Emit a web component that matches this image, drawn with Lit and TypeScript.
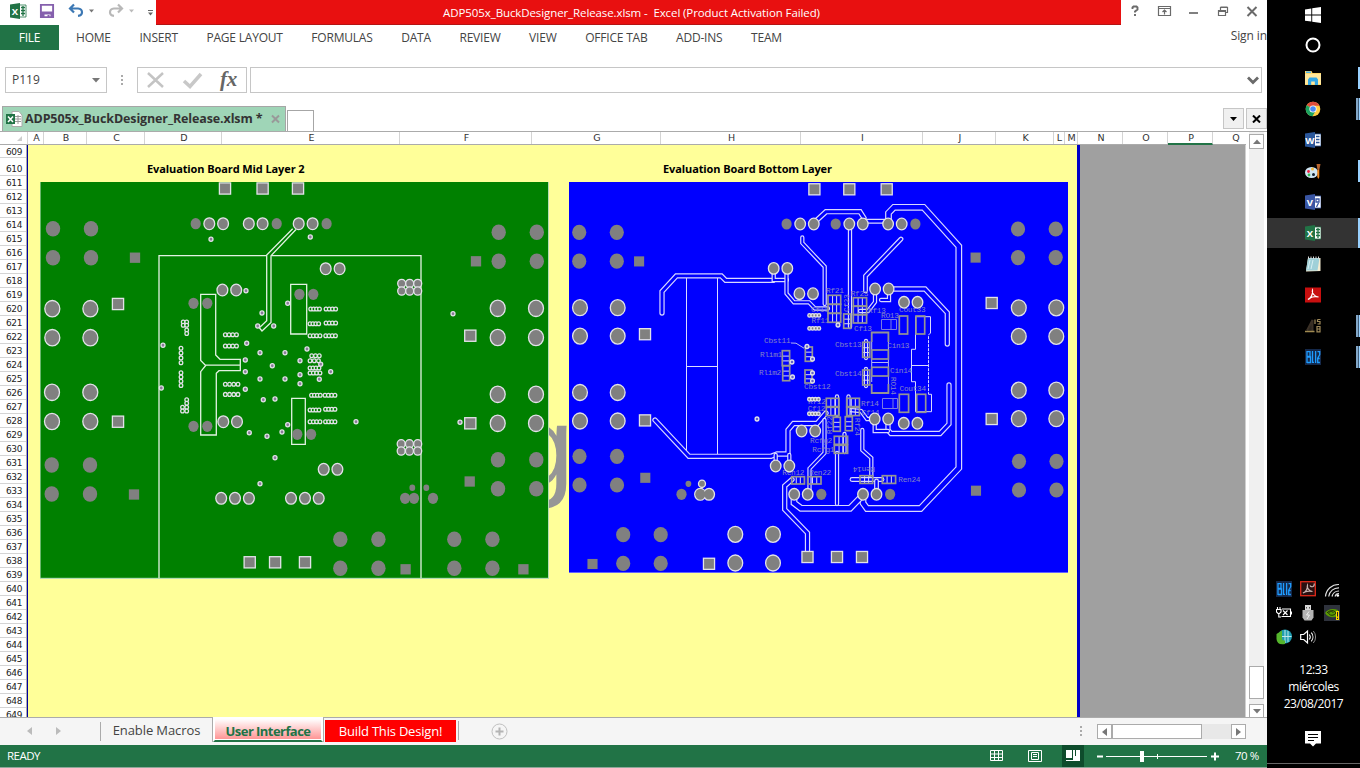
import { LitElement, html, svg, css } from "lit";
import { customElement } from "lit/decorators.js";

type P = [number, number];

const OUT = "#e2e2e8";
const GREY = "#808080";

const discs = (pts: P[], rx: number, ry: number, ring: boolean, fill = GREY) =>
  pts.map(([x, y]) => svg`<ellipse cx=${x} cy=${y} rx=${rx} ry=${ry} fill=${fill} stroke=${ring ? OUT : "none"} stroke-width="1.3"/>`);
const quad = (x1: number, x2: number, y1: number, y2: number): P[] => [[x1, y1], [x2, y1], [x1, y2], [x2, y2]];
const squares = (pts: P[], s: number, ring: boolean) =>
  pts.map(([x, y]) => svg`<rect x=${x - s / 2} y=${y - s / 2} width=${s} height=${s} fill=${GREY} stroke=${ring ? OUT : "none"} stroke-width="1.3"/>`);
const chain = (x1: number, x2: number, y: number, n: number): P[] =>
  Array.from({ length: n }, (_, i) => [x1 + ((x2 - x1) * i) / (n - 1), y] as P);
const vchain = (x: number, y1: number, y2: number, n: number): P[] =>
  Array.from({ length: n }, (_, i) => [x, y1 + ((y2 - y1) * i) / (n - 1)] as P);
const trace = (pts: string, w = 5) => svg`
  <polyline points=${pts} fill="none" stroke="#d8d8ff" stroke-width=${w + 0.3} stroke-linecap="round"/>
  <polyline points=${pts} fill="none" stroke="#0000ff" stroke-width=${w - 2.1} stroke-linecap="round"/>`;

const greenBoard = () => svg`
  <rect x="40" y="182" width="509" height="397" fill="#b4dcb4"/>
  <rect x="40.6" y="182" width="507.4" height="395.8" fill="#008000"/>
  <g fill="none" stroke="#e2f2e2" stroke-width="1.3">
    <path d="M159 578V255.7H266.7M271.3 255.7H421V578"/>
    <path d="M292.7 228.7 266.7 255V320.7L259.3 327.7 262 331 271 322.5V255.7L296 229.5"/>
    <path d="M200.7 294.3H215.7V355L220 359.3H240.3V370.7H219L216.3 373.3V435H200.7V371.7L205.7 365.5 200.7 360.5ZM205.7 365.2H240.3"/>
    <path d="M290.7 284.3h16v49.7h-16zM291.7 398.3h13.6v46h-13.6z"/>
  </g>
  ${discs([...quad(53, 91, 228.7, 257.7), ...quad(51.7, 90, 465, 494), ...quad(498.7, 536.8, 232.3, 261.3),
    ...quad(498, 536.3, 459.7, 488.7), ...quad(340.3, 378.4, 539.3, 568.3), ...quad(454.3, 492.4, 539.3, 568.3)], 7.2, 7.7, false)}
  ${discs([...quad(52.3, 90.4, 308.7, 337.7), ...quad(52, 90.3, 392.3, 421.5), ...quad(497.7, 536, 308.3, 337.5), ...quad(497.7, 536, 394.3, 423.3)], 7.5, 8.2, true)}
  ${discs([[209.3, 223.7], [223.1, 223.7], [248.8, 223.7], [262.6, 223.7], [298.7, 223.7], [312.6, 223.7], [325.7, 268.7], [339.6, 268.7],
    [222.4, 290], [236.2, 290], [223.3, 421.7], [237, 421.7], [323.7, 469.3], [337.4, 469.3], [221.2, 498.3], [235, 498.3], [248.9, 498.3],
    [291, 498.3], [305, 498.3], [318.7, 498.3]], 5.4, 5.9, true)}
  ${discs([[195.7, 223.7], [276.7, 223.7], [326.6, 223.7], [193.5, 303.3], [207.3, 303.3], [299.4, 294.3], [313.3, 294.3], [193.5, 426.3],
    [207.3, 426.3], [297.3, 434.3], [311.1, 434.3], [405.1, 498.3], [414, 498.3], [433, 498.3]], 5.1, 5.6, false)}
  ${discs([[412.3, 487.7], [426.3, 487.7]], 2.9, 3.2, false)}
  ${discs([...chain(401.7, 417.7, 283.5, 3), ...chain(401.7, 417.7, 291, 3), ...chain(401.2, 417.7, 443.9, 3), ...chain(401.2, 417.7, 451, 3)], 4, 4.2, true)}
  ${squares([[225, 188.5], [262.6, 188.5], [298, 188.5], [118, 304], [470.3, 335.7], [118, 421.7], [470.3, 423.3], [249.7, 562.3], [275.1, 562.3], [305, 562.3]], 11.2, true)}
  ${squares([[135, 257.7], [476, 261.3], [134, 494.5], [469.7, 481.5], [405.6, 569.3], [523.4, 569.3]], 10.3, false)}
  ${discs([[211, 239.3], [246, 290.7], [287.7, 303.3], [262, 313], [257.7, 326], [273.7, 326], [246.7, 343.3], [245.3, 360], [260, 352.7],
    [285, 352.7], [163, 345.3], [272.3, 365.7], [310.3, 237], [453, 313.7], [307, 349], [300, 360.7], [245.3, 371.7], [245.3, 389.3],
    [260, 379], [285, 379], [161.3, 388], [263.3, 399.7], [275, 399], [287.7, 424.7], [249.3, 432.7], [267, 436.3], [282, 432], [275, 457.7],
    [260, 483.7], [300, 374.7], [300, 383.7], [330.7, 371.7], [319.3, 379.3], [320.7, 364.3], [356, 421.7], [460, 422.3]], 2, 2.1, true, "#8a7a9a")}
  ${discs([...chain(225.3, 236.5, 334.7, 4), ...chain(225.3, 236.5, 346, 4), ...chain(225.3, 238, 384.2, 4), ...chain(225.3, 238, 394.4, 4),
    ...chain(310.7, 319.5, 309, 4), ...chain(326, 335.7, 309, 4), ...chain(310, 318.7, 323.7, 4), ...chain(326, 335.7, 323, 4),
    ...chain(310, 320, 335.7, 4), ...chain(325.7, 335.5, 335.7, 4), ...chain(311.7, 319.3, 355.7, 3), ...chain(310, 318.5, 360.7, 3),
    ...chain(310, 319, 368, 4), ...chain(310, 320, 373, 4), ...chain(311.5, 320.3, 395.2, 4), ...chain(325, 335, 395.2, 4),
    ...chain(310, 319, 410, 4), ...chain(325.5, 335, 409.3, 4), ...chain(310, 320, 421.8, 4), ...chain(325.5, 335, 421.8, 4),
    [183.2, 322], [186.7, 322], [183.2, 325.3], [186.7, 325.3], [186.7, 330], [186.7, 333.5], ...vchain(181, 348.3, 362.7, 4),
    ...vchain(181, 372.7, 385.5, 4), [186.7, 399.7], [186.7, 403.3], [182.5, 407.3], [186.7, 407.3], [182.5, 411], [186.7, 411]], 1.8, 1.9, true, "#008000")}
`;

const parts: number[][] = [
  [828, 295.3, 12.7, 9, 1], [828, 304.3, 12.7, 9, 1], [828, 313.3, 12.7, 9, 1], [853.3, 297.7, 13.3, 8.3, 1], [853.3, 306.3, 13.3, 8.3, 1],
  [853.3, 314.7, 13.3, 8.3, 1], [843.7, 314, 7, 14.3, 2], [899.3, 316, 8.3, 18, 0], [916, 316, 8.7, 18, 0],
  [871.7, 350, 16.7, 9, 0], [862.7, 342.3, 7, 15, 2], [782.3, 350.7, 7.3, 15, 2], [805.3, 347, 7, 14.3, 2], [782.7, 365.7, 7, 15, 2],
  [805, 370, 7, 13, 2], [826.3, 398.3, 12.7, 8.3, 1], [826.3, 407.3, 12.7, 8.3, 1], [846.7, 398.3, 12.7, 8.3, 1], [846.7, 407.3, 12.7, 8.3, 1],
  [833.3, 417.3, 7, 14, 2], [845.3, 416.7, 7, 14, 2], [834.3, 436.3, 13.3, 8, 1], [834.3, 445.3, 13.3, 8, 1], [791.7, 476.7, 12.7, 7.3, 1],
  [807.7, 476.7, 13.3, 7.3, 1], [860, 475.7, 12.7, 7.7, 1], [882.3, 475.7, 13.3, 7.7, 1], [862.7, 370, 7, 15, 2], [871.7, 367.3, 16.7, 8.7, 0],
  [899.3, 394.3, 9.3, 18, 0], [916.7, 394.3, 9, 18, 0],
];

const designators: [string, number, number][] = [
  ["Cbst11", 764, 342.5], ["Rlim1", 760, 357], ["Rf21", 826, 292.7], ["Rf23", 850.7, 295.5], ["Cf13", 854, 330.5], ["Rf11", 811.5, 322.5],
  ["Cf11", 811, 312.3], ["Rf13", 868, 312.7], ["RO13", 881, 318.3], ["Cout33", 899, 312], ["Cbst13", 835, 347], ["Cin13", 887.3, 348],
  ["Rlim2", 759, 374.7], ["Cbst12", 804, 389], ["Cbst14", 835, 376], ["Cin14", 890, 372.7], ["Cout34", 899.5, 391], ["Rf12", 808, 404],
  ["Cf12", 807.7, 411], ["Rf14", 861, 405.5], ["Cf14", 861.7, 414.5], ["Rcfg2", 810, 443], ["Rcfg1", 812.3, 452], ["Ren12", 782.3, 475],
  ["Ren22", 809, 475], ["Ren24", 898.3, 482],
];

const blueBoard = () => svg`
  <rect x="569" y="182" width="499" height="391" fill="#0000ff"/>
  <path d="M569 572.5H1068" stroke="#6464ff"/>
  <path d="M686.5 277V456M717.5 277V456M686.5 366.5H717.5" stroke="#dcdcff" fill="none"/>
  ${trace("662,313 662,291.5 676.3,275.9 721.3,275.9 725.7,280.4 773,280.4")}
  ${trace("773.7,268 773.7,280 787,280", 4)}
  ${trace("655,420 689,456.3 771,456.3 777,454 788,454 788,430 793.5,423.5 817,423.5 826,413")}
  ${trace("775.7,466 775.7,455", 4)}${trace("789.3,466 789.3,455", 4)}
  ${trace("786.5,273 786.5,293.5 794,302.3 809,302.3 815,308.5 828,308.5", 4)}
  ${trace("802.3,237.5 802.3,243 824.7,266.7 824.7,304", 4)}
  ${trace("850,228 850,327", 4)}
  ${trace("901,239 865.5,276 865.5,291", 4.5)}
  ${trace("813.7,223 826,211.7 860,211.7 864,218 862.7,224")}
  ${trace("862.7,221.3 888,221.3", 4.6)}
  ${trace("888.5,224 888.5,213 894,207.3 923.5,207.3 958.8,246.3 958.8,468 920.5,508.5 867,508.5 863,503 863,495", 6.5)}
  ${trace("888.3,289 925,289 947.3,312.7 947.3,344")}
  ${trace("875,289 875,302 868,311 860,311", 4)}${trace("881,300 889,300 889,290", 4)}
  ${trace("888,420 888,430 891,433.5 940,433.5 949,424 949,385")}
  ${trace("850,410 861,411 867,419 874,419", 4)}${trace("874.7,419 874.7,431 888,431", 4)}
  ${trace("794,494 794,503 801,508.3 850,508.3 861,497", 6.5)}
  ${trace("837,453 837,504", 4)}
  ${trace("824.5,420 824.5,453 809.5,468.5 809.5,494", 4)}
  ${trace("862.3,430 862.3,450 871.3,458 871.3,476", 4)}
  ${trace("792,479.5 784.7,486 784.7,509.5 807.5,533 807.5,552", 5)}
  ${trace("852,479.5 882,479.5", 4.5)}${trace("876.5,481 876.5,494", 4.5)}
  ${trace("837,396.5 837,415", 4)}${trace("848.5,396.5 848.5,415", 4)}${trace("844.5,434 844.5,452", 4)}
  ${trace("866,341 866,358", 4)}${trace("866,369 866,386", 4)}
  <path d="M915.5 316.7V349.3H911.5V381.7H915.5V411.7H931.5V394.3H928.5M930.5 333V316.7H915.5M911.5 365.5H928.5" fill="none" stroke="#d8d8ff"/>
  <path d="M930.5 333 928.5 335V394.3" fill="none" stroke="#d8d8ff" stroke-dasharray="3 1"/>
  <path d="M881.5 319.5h15v10h-15zM891 319.5v10M882.5 398.500h15v10h-15zM893 398.500v10" fill="none" stroke="#7a7ae0"/>
  <path d="M871.7 342V332.500h16.7V342M871.7 384V393h16.7V384" fill="none" stroke="#949494" stroke-width="1.8"/>
  <path d="M871.7 342V382M888.4 342V384M872 362.500h16M791 343l5 .2 8 5" fill="none" stroke="#b4b4f0"/>
  ${parts.map(([x, y, w, h, k]) => svg`
    ${k === 1 ? svg`<path d="M${x + w * 0.36} ${y}v${h}M${x + w * 0.68} ${y}v${h}" stroke="#d8d8f8"/>` : ""}
    ${k === 2 ? svg`<path d="M${x} ${y + h * 0.36}h${w}M${x} ${y + h * 0.68}h${w}" stroke="#d8d8f8"/>` : ""}
    <rect x=${x} y=${y} width=${w} height=${h} fill="none" stroke="#949494" stroke-width="1.7"/>`)}
  <g font-family="Liberation Mono, monospace" font-size="7.8" fill="#8484c8" letter-spacing="-.3">
    ${designators.map(([t, x, y]) => svg`<text x=${x} y=${y}>${t}</text>`)}
    <text transform="translate(875 467) rotate(180)">Ren14</text>
    <text transform="translate(832 434) rotate(-90)">Rf22</text>
    <text transform="translate(855 418) rotate(90)">Rf24</text>
    <text transform="translate(891 377) rotate(90)">RO14</text>
    <text transform="translate(849 312) rotate(-90)">Cf23</text>
  </g>
  ${discs([...quad(579.2, 616.8, 232.3, 261.2), ...quad(579.5, 617, 456.3, 485), ...quad(623.2, 660.7, 534.7, 563.4),
    ...quad(1018, 1055.7, 229, 257.6), ...quad(1019, 1056.5, 461.3, 490)], 7.1, 7.6, false)}
  ${discs([...quad(580, 617.7, 307.7, 336.1), ...quad(580, 617.7, 392.5, 421), ...quad(735.3, 773, 534.3, 563), ...quad(1018.8, 1056.3, 307.8, 336.4), ...quad(1018.8, 1056.3, 390.2, 418.7)], 7.4, 8, true)}
  ${discs([[800.2, 224], [813.8, 224], [849.3, 224], [862.8, 224], [888.1, 224], [901.7, 224], [773.7, 268.4], [787.3, 268.4], [799.4, 293.7],
    [813, 293.7], [875.1, 289], [888.6, 289], [904, 302.3], [917.5, 302.3], [801.6, 431], [815.2, 431], [874.7, 419], [888.2, 419],
    [903.8, 423.3], [917.4, 423.3], [775.7, 466], [789.3, 466], [794.2, 494.3], [807.7, 494.3], [863, 494.3], [876.5, 494.3]], 5.3, 5.8, true)}
  ${discs([[786.6, 224], [835.7, 224], [915.4, 224], [821.3, 494.3], [890.1, 494.3], [681.5, 494.3]], 5.1, 5.6, false)}
  ${discs([[688.4, 483.8]], 2.9, 3.1, false)}
  <path d="M702 487v4" stroke=${OUT}/>
  ${discs([[702, 483.8]], 3.5, 3.7, true)}
  ${discs([[700.2, 494.3], [709, 494.3]], 5.5, 5.9, true)}
  <ellipse cx="700.5" cy="494.3" rx="4.9" ry="5.2" fill=${GREY} />
  ${squares([[814.4, 189.3], [849.3, 189.3], [886.7, 189.3], [991.7, 303], [991.7, 419], [645, 334.2], [645, 420.4], [709, 563.8], [807.5, 557], [837, 557], [862, 557]], 11.1, true)}
  ${squares([[639.1, 261.4], [975.6, 257.6], [645.3, 477.8], [976, 490.7], [592.5, 564]], 10.1, false)}
  ${discs([[757, 419], [838, 325], [812.5, 359], [792, 362], [792.5, 377], [812.5, 373], [812.5, 381], [807, 346.5]], 1.9, 2, true, "#6464c8")}
  ${discs([...chain(809.5, 819, 315.4, 4), ...chain(809.5, 819, 328.4, 4), ...chain(809.3, 818.5, 399.3, 4), ...chain(809.3, 818.5, 413.8, 4)], 1.7, 1.8, true)}
`;

const columns: [string, number][] = [["A", 16], ["B", 43], ["C", 58], ["D", 77], ["E", 178], ["F", 132], ["G", 129], ["H", 140], ["I", 122],
  ["J", 73], ["K", 58], ["L", 11], ["M", 13], ["N", 45], ["O", 45], ["P", 45], ["Q", 45]];

const office = (letter: string, c: string, lines = "M11 4.5h3.5M11 7.5h3.5M11 10.5h3.5") => svg`
  <path d="M8 2h8v12H8z" fill="#fff" stroke=${c} stroke-width=".8"/>
  <path d=${lines} stroke=${c} stroke-width="1.3" fill="none"/>
  <path d="M0 1.6 10 0V16L0 14.4z" fill=${c}/>
  <text x="4.9" y="11.6" text-anchor="middle" font-family="Open Sans, sans-serif" font-weight="700" font-size="9.5" fill="#fff">${letter}</text>`;

const bliz = svg`<rect width="16" height="16" fill="#14284a"/>
  <path d="M2 2v12M2 2.7h3v4.6H2M2 8h3.500v5.500H2M7.500 2v11.400h1.500M10.600 2v12M12.500 2.700h2.200v3l-2 3.500v4.300h2.200M14.700 9.500h-2" fill="none" stroke="#1e9cff" stroke-width="1.300"/>`;

const taskIcons: { g: unknown; mark?: string }[] = [
  { mark: "one", g: svg`<path d="M0 1h6.500l1 2H16v12H0z" fill="#ffd76a"/><path d="M1 1.500h5v1.500H1z" fill="#4ab4f0"/><path d="M0 4h16v10H0z" fill="#ffe79c"/><path d="M3 15V9.500l1.500-2h7L13 9.500V15h-3.200v-3.500H6.200V15z" fill="#32a8e8"/>` },
  { mark: "two", g: svg`<circle cx="8" cy="8" r="7.300" fill="#ffce44"/><path d="M8 8 1.700 4.300A7.300 7.300 0 0 1 14.400 4.700H8z" fill="#de4c3c"/><path d="M8 8 1.700 4.300A7.300 7.300 0 0 0 7.500 15.300L10.500 10z" fill="#1aa260"/><circle cx="8" cy="8" r="3.600" fill="#fff"/><circle cx="8" cy="8" r="2.800" fill="#4a8af4"/>` },
  { g: office("W", "#2b579a") },
  { mark: "one", g: svg`<ellipse cx="6.500" cy="9.500" rx="6.500" ry="5.500" fill="#cfe6f4"/><circle cx="3.500" cy="8.500" r="1.400" fill="#e24"/><circle cx="7.500" cy="6" r="1.500" fill="#f6b93b"/><circle cx="4" cy="12" r="1.400" fill="#3b5"/><circle cx="8.500" cy="11.500" r="1.500" fill="#123"/><path d="M11.500 1h4l-1.200 6h-1.800z" fill="#b5622c"/><path d="M12.300 7h2v7l-1 2-1-2z" fill="#f08a24"/>` },
  { g: office("V", "#3955a3", "M11 5h3v3h-3zM11.500 13l2-4") },
  { mark: "active", g: office("X", "#217346", "M11 4.500h4M11 7.500h4M11 10.500h4M13 3v10") },
  { g: svg`<path d="M3 2h12.500v13L1 15.500z" fill="#f4ecd2"/><path d="M3 2h11.500L12.500 14.500H1z" fill="#9fd0d8"/><path d="M5 4 3 13M8 4 6 13" stroke="#d8f0f4"/><path d="M3.500.5v2.500M6 .5v2.500M8.500.5v2.500M11 .5v2.500M13.500.5v2.500" stroke="#d8d8d8"/>` },
  { g: svg`<rect y=".5" width="16" height="15" fill="#c80f0f"/><path d="M3 12.500c3-1 5-5.500 4.500-9.500-1 2 1.500 7 6 7-4-1.300-8.500.5-10.500 2.500z" fill="none" stroke="#fff" stroke-width="1.200"/>` },
  { mark: "two", g: svg`<path d="M2 12.500 7.500 2v11" fill="#2c2620" stroke="#3a3026" stroke-width="2"/><path d="M0 13.500h9.500" stroke="#a08a50" stroke-width="1.500"/><path d="M10 1.500V6M12.500 1.500h3M12.500 1.500V3.500h2.500V6h-2.500M12 8.500h3v2.500h-3zM12 11v2.800h3V11" fill="none" stroke="#a08a5a" stroke-width="1.200"/>` },
  { mark: "two", g: bliz },
];

const tray: unknown[] = [
  bliz,
  svg`<rect x=".7" y=".7" width="14.600" height="14" fill="#2a1010" stroke="#e02a1a" stroke-width="1.300"/><path d="M3 12c3-1 5-5 4.500-8-1 2 1 6 5 6.500-4-.7-7.500 0-9.500 1.500zM10 4.500a2.200 2.200 0 1 0 4-2" fill="none" stroke="#c8b4b0" stroke-width="1.200"/>`,
  svg`<path d="M1.500 15.500A13 13 0 0 1 15 3.500M4.700 15.500A10 10 0 0 1 15 6.800M8 15.500A7 7 0 0 1 15 10M11 15.500a4 4 0 0 1 4-3" fill="none" stroke="#e0e0e0" stroke-width="1.200"/><circle cx="13.800" cy="14.500" r="1.300" fill="#fff"/>`,
  svg`<path d="M.5 4.500h4.500V7L3.500 8.500H2L.5 7zM1.500 2v2.500M4 2v2.500M2.800 8.500V12H5M6 4h8.500v7.500H5.500M15.500 6.500v3M7 5.500l4.500 4.500M11.500 5.500 7 10" fill="none" stroke="#fff" stroke-width="1.100"/>`,
  svg`<path d="M5 0h6v5H5z" fill="#d8d8d8"/><path d="M2.500 5h11v7.500l-2 3h-7l-2-3z" fill="#b4b4b4"/><path d="M6.500 2v1.500M9.500 2v1.500" stroke="#555"/><path d="M9 6.500 6.500 10h3L7 14" stroke="#eee" fill="none"/>`,
  svg`<rect width="16" height="16" fill="#2e323c"/><path d="M1 8C4 3.500 9 3 14 5v6C9 13.500 4 12.500 1 8z" fill="#5a9c00"/><path d="M3 8c2.500-3 7-3.500 9 0-2 3-6.500 3-7.500 0 1.500-2 4-2 5 0" fill="none" stroke="#23300c"/><path d="M12 6h3v9h-3z" fill="#ffd800"/><path d="M13.500 7v4.500M13.500 12.800v1.200" stroke="#222"/>`,
  svg`<circle cx="9" cy="7.500" r="7" fill="#1f9db0"/><path d="M9 1v13M3 7.500h12.500M12 2v11" stroke="#bfe8ee"/><path d="M.5 5 6 1.500v8.500q.5 2 3 1.500v3.500Q1 16.500.5 10z" fill="#55b52c"/>`,
  svg`<path d="M.7 5.500h3L7.500 2v12L3.700 10.500h-3z" fill="none" stroke="#fff" stroke-width="1.200"/><path d="M9.300 5.500a4 4 0 0 1 0 5M11.300 3.700a6.500 6.500 0 0 1 0 8.600" fill="none" stroke="#fff" stroke-width="1.100"/><path d="M13.300 2a9 9 0 0 1 0 12" fill="none" stroke="#888"/>`,
];

@customElement("app-root")
export class AppRoot extends LitElement {
  static styles = css`
    :host { display: block; width: 1360px; height: 768px; overflow: hidden; background: #fff; color: #444; font: 12px/16px "Open Sans", "Noto Sans", sans-serif; }
    * { box-sizing: border-box; }
    svg { display: block; flex: none; }
    .desk { display: flex; height: 768px; }
    .excel { width: 1267px; flex: none; display: flex; flex-direction: column; overflow: hidden; white-space: nowrap; }
    .title { height: 25px; display: flex; }
    .banner { width: 965px; background: #e81010; border-bottom: 1px solid #b41414; color: #fff; text-align: center; padding: 5px 14px 0 0; font-size: 11.5px; letter-spacing: -.1px; }
    .tabs { height: 25px; display: flex; line-height: 25px; font-size: 12px; letter-spacing: -.2px; }
    .file { width: 59px; background: #217346; color: #fff; text-align: center; margin-right: 17px; }
    .ribbon { display: flex; width: 706px; justify-content: space-between; }
    .signin { margin-left: auto; line-height: 21px; letter-spacing: -.1px; }
    .formula { height: 56px; padding: 17px 5px 13px; display: flex; }
    .box { border: 1px solid #c6c6c6; height: 26px; display: flex; align-items: center; }
    .name { width: 102px; padding: 0 6px 0 6px; justify-content: space-between; letter-spacing: 0; }
    .dots { margin: 7px 13px 0; }
    .fx { width: 110px; margin-right: 3px; }
    .input { width: 1012px; justify-content: flex-end; padding-right: 2px; }
    .docs { height: 25px; display: flex; align-items: flex-end; padding-left: 2px; }
    .doc { width: 284px; height: 25px; background: #9fd5b7; border: 1px solid #a6a6a6; border-bottom: 0; display: flex; align-items: center; padding: 0 4px 0 3px; font: 700 12.5px/22px "Open Sans", sans-serif; color: #333; }
    .doc span { margin-left: 2px; flex: 1; letter-spacing: -.12px; }
    .newdoc { width: 27px; height: 21px; margin-left: 1px; border: 1px solid #a6a6a6; border-bottom: 0; }
    .dbtn { width: 21px; height: 21px; border: 1px solid #c6c6c6; background: #f0f0f0; margin: 0 0 2px 2px; display: grid; place-items: center; }
    .push { margin-left: auto; }
    .work { height: 586px; border-top: 1px solid #ababab; display: flex; }
    .sheet { width: 1246px; overflow: hidden; }
    .cols { height: 13px; display: flex; border-bottom: 1px solid #ababab; font: 9.500px/12px "DejaVu Sans", sans-serif; color: #333; }
    .corner { width: 28px; flex: none; display: flex; align-items: flex-end; justify-content: flex-end; padding: 0 5px 3px 0; border-right: 1px solid #d4d4d4; }
    .col { flex: none; text-align: center; border-right: 1px solid #d4d4d4; height: 12px; padding-left: 2px; }
    .narrow { padding-left: 0; text-indent: 1px; }
    .sel { border-bottom: 2px solid #217346; height: 13px; }
    .grid { display: flex; height: 572px; }
    .rows { width: 27px; flex: none; overflow: hidden; border-right: 1px solid #ababab; font: 9px/14px "DejaVu Sans", sans-serif; letter-spacing: -.4px; color: #222; }
    .row { height: 14px; padding-left: 6px; border-bottom: 1px solid #d4d4d4; line-height: 14px; }
    .row.first { height: 13px; } .row.tall { height: 18px; line-height: 22px; }
    .page { width: 1053px; flex: none; background: #ffff99; border-left: 1px solid #0000a0; border-right: 3px solid #0000c8; position: relative; padding-left: 12px; }
    .heads { height: 37px; display: flex; padding: 16px 0 0 107px; font: 700 11px/16px "Open Sans", sans-serif; color: #000; letter-spacing: -.1px; }
    .head { width: 516px; }
    .mark { position: absolute; left: 481px; top: 270px; z-index: 0; }
    .boards { display: flex; gap: 20px; position: relative; z-index: 1; }
    .void { flex: 1; background: #a0a0a0; border-right: 1px solid #d0d0d0; }
    .vs { width: 15px; margin-left: 3px; background: #f0f0f0; display: flex; flex-direction: column; padding-top: 2px; }
    .sb { width: 15px; height: 15px; border: 1px solid #ababab; background: #fff; display: grid; place-items: center; flex: none; }
    .vthumb { height: 33px; margin: 517px 0 5px; border: 1px solid #ababab; background: #fff; flex: none; }
    .sheets { height: 28px; background: #f5f5f5; border-top: 1px solid #ababab; display: flex; }
    .nav { width: 101px; border-right: 1px solid #ababab; margin: 4px 0 4px; display: flex; padding: 5px 0 0 27px; gap: 24px; }
    .st { font-size: 13px; line-height: 25px; text-align: center; }
    .st1 { width: 112px; letter-spacing: -.1px; padding-right: 1px; }
    .st2 { width: 110px; margin-top: -1px; height: 25px; border: 2px solid #fff; border-bottom: 2px solid #217346; background: linear-gradient(#fff, #ff9090); color: #217346; font-weight: 700; letter-spacing: -.55px; line-height: 24px; box-shadow: inset 0 -1px #fff, -1px 0 #ababab, 1px 0 #ababab; }
    .st3 { width: 131px; height: 22px; margin: 2px 2px 0; background: #f00; color: #fff; line-height: 22px; letter-spacing: -.2px; }
    .end { width: 1px; background: #ababab; margin: 3px 32px 5px 0; }
    .plus { margin-top: 5px; }
    .hs { display: flex; margin: 6px 21px 0 14px; width: 149px; height: 15px; background: #e8e8e8; }
    .hthumb { width: 90px; border: 1px solid #ababab; background: #fff; flex: none; }
    .grow { flex: 1; }
    .status { height: 23px; background: #217346; border-bottom: 1px solid #8ea89a; color: #fff; display: flex; line-height: 22px; padding: 0 8px 0 7px; font-size: 11.5px; letter-spacing: -.5px; }
    .status svg { margin-left: auto; }
    .pct { width: 24px; margin-left: 12px; letter-spacing: -.5px; }
    .bar { width: 93px; background: #000; color: #fff; display: flex; flex-direction: column; }
    .cell { height: 30px; display: grid; place-items: center; flex: none; padding-right: 1px; }
    .app { height: 31px; display: grid; place-items: center; position: relative; flex: none; padding-right: 1px; }
    .lead { margin-top: 2px; }
    .active { background: linear-gradient(#000 1px, #333 1px); }
    .ind { position: absolute; right: 0; top: 5px; width: 2px; height: 22px; background: #99d1ff; }
    .ind.two { width: 4px; background: linear-gradient(90deg, #84a8c8 2px, #3f5c78 2px 3px, #99d1ff 3px); }
    .ind.active { top: 1px; height: 30px; background: #99d1ff; }
    .tray { margin-top: 209px; padding-left: 9px; display: grid; grid-template-columns: repeat(3, 16px); column-gap: 8px; row-gap: 8px; }
    .clock { margin-top: 16px; text-align: center; font-size: 12px; line-height: 17px; letter-spacing: -.4px; }
    .note { margin: 19px 0 0 38px; }
    .foot { margin-top: auto; height: 5px; border-top: 1px solid #666; }
  `;

  render() {
    return html`<div class="desk">
      <div class="excel">
        <div class="title">
          <svg width="156" height="25" viewBox="0 0 156 25">
            <g transform="translate(10 3)">${office("X", "#217346", "M11 4.500h4M11 7.500h4M11 10.500h4M13 3v10")}</g>
            <path d="M40.900 4.900h12.200v12.200H40.900z" fill="#fff" stroke="#8560ad" stroke-width="1.900"/><path d="M41 11.500h12v6h-2.500V14.500h-6v3H41z" fill="#8560ad"/><path d="M47.500 15h2v2.500h-2z" fill="#8560ad"/>
            <path d="M74 4.500 70 8.500l4 4M70.500 8.500h7.500q4 .5 4 3.700t-4 3.600" fill="none" stroke="#3c78b4" stroke-width="2.200"/>
            <path d="M89 9.500h5l-2.500 3z" fill="#777"/>
            <path d="M118 4.500l4 4-4 4M121.500 8.500H114q-4 .5-4 3.700t4 3.600" fill="none" stroke="#b8b8b8" stroke-width="2.200"/>
            <path d="M129 9.500h5l-2.500 3z" fill="#bbb"/>
            <path d="M148 10.500h5" stroke="#666"/><path d="M148 12.500h5l-2.500 3z" fill="#666"/>
          </svg>
          <div class="banner">ADP505x_BuckDesigner_Release.xlsm - &nbsp;Excel (Product Activation Failed)</div>
          <svg width="146" height="25" viewBox="1121 0 146 25" fill="none" stroke="#6a6a6a">
            <path d="M1132.500 9V7.500l1-1h3l1 1v2l-2.500 2v1M1135 14v2" stroke-width="1.900"/>
            <path d="M1158.500 6.500h12v9h-12zM1158.500 8.500h12M1164.500 14.500v-4M1162.500 12l2-2 2 2" stroke-width="1.200"/>
            <path d="M1189 13h9" stroke-width="1.700"/>
            <path d="M1218.500 10.500h7v5h-7zM1218.500 11.500h7M1220.500 10V7.500h7v5h-2M1220.500 7h7" stroke-width="1.200"/>
            <path d="M1247.500 7l9 9M1256.500 7l-9 9" stroke-width="2"/>
          </svg>
        </div>
        <div class="tabs">
          <div class="file">FILE</div>
          <div class="ribbon">${["HOME", "INSERT", "PAGE LAYOUT", "FORMULAS", "DATA", "REVIEW", "VIEW", "OFFICE TAB", "ADD-INS", "TEAM"].map((t) => html`<span>${t}</span>`)}</div>
          <div class="signin">Sign in</div>
        </div>
        <div class="formula">
          <div class="box name"><span>P119</span><svg width="8" height="5"><path d="M0 0h8L4 4.500z" fill="#777"/></svg></div>
          <svg class="dots" width="4" height="13"><path d="M1 1h2v2H1zM1 5h2v2H1zM1 9h2v2H1z" fill="#aaa"/></svg>
          <div class="box fx"><svg width="108" height="24" viewBox="0 0 108 24">
            <path d="M10 5l15 14M25 5 10 19" stroke="#c4c4c4" stroke-width="2.500"/><path d="M46 13l6 5.500L63 6" fill="none" stroke="#c8c8c8" stroke-width="3.500"/>
            <text x="82" y="18" font-family="Liberation Serif, serif" font-weight="700" font-style="italic" font-size="21" fill="#666" letter-spacing="-.3">fx</text></svg></div>
          <div class="box input"><svg width="12" height="9"><path d="M1 1.500l5 5 5-5" fill="none" stroke="#6a6a6a" stroke-width="2.800"/></svg></div>
        </div>
        <div class="docs">
          <div class="doc"><svg width="17" height="16" viewBox="0 0 17 16"><path d="M6 .5h7L16 4v11.500H6z" fill="#fff" stroke="#aaa"/><path d="M9 5.500h6M9 8h6M9 10.500h6M12 4v9" stroke="#9a9a9a"/><path d="M0 3h9v10H0z" fill="#217346"/><path d="M2 5.500l5 5.500M7 5.500 2 11" stroke="#fff" stroke-width="1.500"/></svg>
            <span>ADP505x_BuckDesigner_Release.xlsm *</span>
            <svg width="11" height="10"><path d="M2 1.500l7 7M9 1.500l-7 7" stroke="#999" stroke-width="2"/></svg></div>
          <div class="newdoc"></div>
          <div class="dbtn push"><svg width="7" height="4"><path d="M0 0h7L3.500 4z" fill="#000"/></svg></div>
          <div class="dbtn"><svg width="9" height="8"><path d="M1 .5l7 7M8 .5l-7 7" stroke="#000" stroke-width="2"/></svg></div>
        </div>
        <div class="work">
          <div class="sheet">
            <div class="cols"><div class="corner"><svg width="5" height="5"><path d="M5 0v5H0z" fill="#ccc"/></svg></div>
              ${columns.map(([c, w]) => html`<div class="col ${c === "P" ? "sel" : w < 14 ? "narrow" : ""}" style="width:${w}px">${c}</div>`)}</div>
            <div class="grid">
              <div class="rows">${Array.from({ length: 41 }, (_, i) => html`<div class="row ${i === 0 ? "first" : i === 1 ? "tall" : ""}">${609 + i}</div>`)}</div>
              <div class="page">
                <svg class="mark" width="80" height="110" viewBox="509 415 80 110"><text x="511" y="485" font-family="Liberation Sans, Arial, sans-serif" font-size="113" fill="#969696">g</text></svg>
                <div class="heads"><div class="head">Evaluation Board Mid Layer 2</div><div>Evaluation Board Bottom Layer</div></div>
                <div class="boards">
                  <svg width="509" height="397" viewBox="40 182 509 397">${greenBoard()}</svg>
                  <svg width="499" height="391" viewBox="569 182 499 391">${blueBoard()}</svg>
                </div>
              </div>
              <div class="void"></div>
            </div>
          </div>
          <div class="vs">
            <div class="sb"><svg width="8" height="5"><path d="M0 5 4 .5 8 5z" fill="#777"/></svg></div>
            <div class="vthumb"></div>
            <div class="sb"><svg width="8" height="5"><path d="M0 0h8L4 4.500z" fill="#777"/></svg></div>
          </div>
        </div>
        <div class="sheets">
          <div class="nav"><svg width="5" height="8"><path d="M5 0v8L0 4z" fill="#bbb"/></svg><svg width="5" height="8"><path d="M0 0v8l5-4z" fill="#bbb"/></svg></div>
          <div class="st st1">Enable Macros</div><div class="st st2">User Interface</div><div class="st st3">Build This Design!</div><div class="end"></div>
          <svg class="plus" width="17" height="17"><circle cx="8.500" cy="8.500" r="7.500" fill="none" stroke="#c0c0c0"/><path d="M8.500 4.500v8M4.500 8.500h8" stroke="#b4b4b4" stroke-width="2"/></svg>
          <svg class="push" width="4" height="28"><path d="M1 8h2v2H1zM1 12h2v2H1zM1 16h2v2H1z" fill="#aaa"/></svg>
          <div class="hs"><div class="sb"><svg width="5" height="8"><path d="M5 0v8L0 4z" fill="#777"/></svg></div><div class="hthumb"></div><div class="grow"></div><div class="sb"><svg width="5" height="8"><path d="M0 0v8l5-4z" fill="#777"/></svg></div></div>
        </div>
        <div class="status"><span>READY</span>
          <svg width="240" height="22" viewBox="983 745 240 22" fill="none" stroke="#fff">
            <path d="M1062 745h22v22h-22z" fill="#0e4c2c" stroke="none"/>
            <path d="M990.500 750.500h12v10h-12zM990.500 754h12M990.500 757.500h12M994.500 750.500v10M998.500 750.500v10"/>
            <path d="M1028.500 750.500h13v11h-13zM1031.500 752.500h7v7h-7zM1033 754.500h4M1033 756.500h4"/>
            <path d="M1066 750h6v8h-6zM1073 750h7v11h-7z" fill="#fff" stroke="none"/><path d="M1075.500 750v6" stroke="#0e4c2c"/><path d="M1066 760.500h7"/>
            <path d="M1097 756.500h6M1211 756.500h8M1215 752.500v8" stroke-width="2"/><path d="M1106 756.500h101M1157.500 754v5"/>
            <path d="M1140 751h4v11h-4z" fill="#fff" stroke="none"/>
          </svg><span class="pct">70 %</span></div>
      </div>
      <div class="bar">
        <div class="cell"><svg width="16" height="16"><path d="M0 2.500 6.300 1.500V7.500H0zM7.200 1.300 16 0V7.500H7.200zM0 8.500h6.300v6L0 13.700zM7.200 8.500H16V16l-8.800-1.300z" fill="#fff"/></svg></div>
        <div class="cell"><svg width="16" height="16"><circle cx="8" cy="8" r="6.500" fill="none" stroke="#fff" stroke-width="2"/></svg></div>
        ${taskIcons.map((t, i) => html`<div class="app ${i === 0 ? "lead" : ""} ${t.mark === "active" ? "active" : ""}"><svg width="16" height="16" viewBox="0 0 16 16">${t.g}</svg>${t.mark ? html`<i class="ind ${t.mark}"></i>` : ""}</div>`)}
        <div class="tray">${tray.map((g) => html`<svg width="16" height="16" viewBox="0 0 16 16">${g}</svg>`)}</div>
        <div class="clock">12:33<br>miércoles<br>23/08/2017</div>
        <svg class="note" width="16" height="16"><path d="M0 0h16v12.500h-5L8 15.500 5 12.500H0z" fill="#fff"/><path d="M3 3.500h10M3 6.500h10M3 9.500h6" stroke="#000"/></svg>
        <div class="foot"></div>
      </div>
    </div>`;
  }
}
